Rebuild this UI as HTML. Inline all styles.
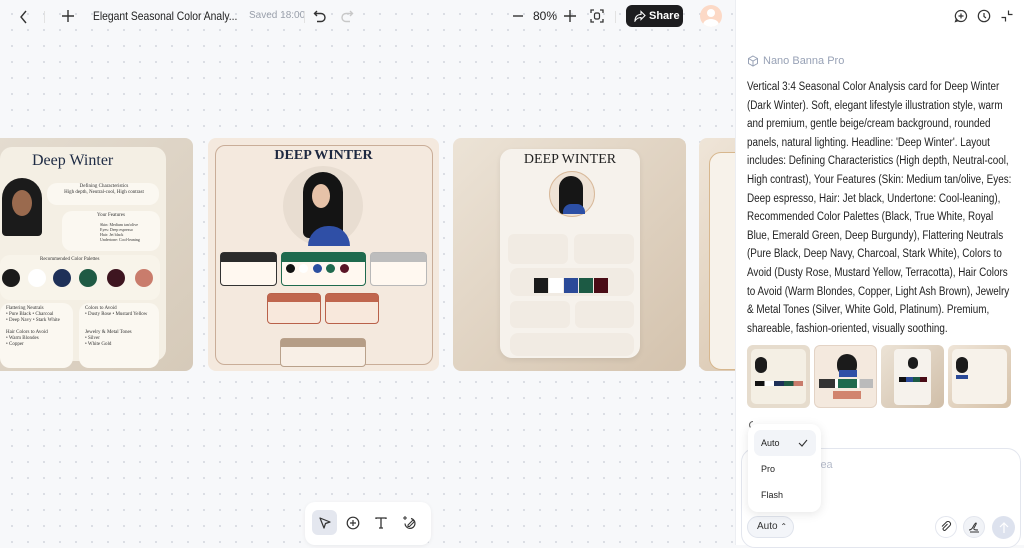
<!DOCTYPE html>
<html><head><meta charset="utf-8"><style>
*{box-sizing:border-box;margin:0;padding:0}
body{width:1024px;height:545px;overflow:hidden;font-family:"Liberation Sans",sans-serif;background:#f7f8fa;position:relative}
.canvas{position:absolute;left:0;top:0;width:735px;height:545px;background-color:#f7f8fa;background-image:radial-gradient(#d9dce3 1px,transparent 1.2px);background-size:16px 16px;background-position:4px 6px}
.top{position:absolute;left:0;top:0;width:735px;height:34px;font-size:12px;color:#222}
.panel{position:absolute;left:735px;top:0;width:289px;height:545px;background:#fff;border-left:1px solid #eceef2}
.card{position:absolute;border-radius:8px;overflow:hidden}
.serif{font-family:"Liberation Serif",serif}
.dot{position:absolute;border-radius:50%}
.p{position:absolute;font-size:11.5px;color:#1f1f1f;line-height:18.6px;left:11px;top:78px;white-space:nowrap;transform:scaleX(0.86);transform-origin:left top}
svg{display:block}
</style></head><body>
<div class="canvas"></div>
<div class="top">
 <svg style="position:absolute;left:19px;top:10px" width="10" height="14" viewBox="0 0 10 14"><path d="M7 1L2 7l5 6" stroke="#333" stroke-width="1.4" fill="none"/></svg>
 <div style="position:absolute;left:44px;top:11px;width:1px;height:12px;background:#e2e2e2"></div>
 <svg style="position:absolute;left:61px;top:9px" width="14" height="14" viewBox="0 0 14 14"><path d="M7 1v12M1 7h12" stroke="#333" stroke-width="1.4"/></svg>
 <span style="position:absolute;left:93px;top:9px;font-size:12px;color:#222;white-space:nowrap;transform:scaleX(0.86);transform-origin:left">Elegant Seasonal Color Analy...</span>
 <span style="position:absolute;left:249px;top:10px;font-size:10px;color:#9aa0ab;white-space:nowrap">Saved 18:00</span>
 <div style="position:absolute;left:304px;top:11px;width:1px;height:12px;background:#e2e2e2"></div>
 <svg style="position:absolute;left:313px;top:9px" width="14" height="14" viewBox="0 0 14 14"><path d="M4 2L1.5 4.5 4 7M1.5 4.5H8a4 4 0 010 8H4" stroke="#333" stroke-width="1.4" fill="none"/></svg>
 <svg style="position:absolute;left:340px;top:9px" width="14" height="14" viewBox="0 0 14 14"><path d="M10 2l2.5 2.5L10 7M12.5 4.5H6a4 4 0 000 8h4" stroke="#c8c8c8" stroke-width="1.4" fill="none"/></svg>
 <svg style="position:absolute;left:511px;top:9px" width="14" height="14"><path d="M2 7h10" stroke="#333" stroke-width="1.4"/></svg>
 <span style="position:absolute;left:533px;top:9px;font-size:12px">80%</span>
 <svg style="position:absolute;left:563px;top:9px" width="14" height="14"><path d="M7 1v12M1 7h12" stroke="#333" stroke-width="1.4"/></svg>
 <svg style="position:absolute;left:590px;top:9px" width="14" height="14" viewBox="0 0 14 14"><path d="M1 4V1h3M10 1h3v3M13 10v3h-3M4 13H1v-3" stroke="#333" stroke-width="1.3" fill="none"/><rect x="4.5" y="4" width="5" height="6" rx="1.5" stroke="#333" stroke-width="1.2" fill="none"/></svg>
 <div style="position:absolute;left:615px;top:11px;width:1px;height:12px;background:#e2e2e2"></div>
 <div style="position:absolute;left:626px;top:5px;width:57px;height:22px;background:#1d1d1f;border-radius:6px;color:#fff;font-size:11px;font-weight:bold;line-height:22px;padding-left:23px">Share
  <svg style="position:absolute;left:8px;top:5px" width="12" height="12" viewBox="0 0 12 12"><path d="M7 1.5l4 4-4 4V7.5C4 7.5 2.5 8.5 1 11c0-4 2-6.5 6-6.5z" stroke="#fff" stroke-width="1.1" fill="none"/></svg></div>
 <div style="position:absolute;left:700px;top:5px;width:22px;height:22px;border-radius:50%;background:#fcd9c6;overflow:hidden"><div style="position:absolute;left:7px;top:4px;width:8px;height:8px;border-radius:50%;background:#fff"></div><div style="position:absolute;left:3px;top:14px;width:16px;height:12px;border-radius:50%;background:#fff"></div></div>
</div>

<div class="card" style="left:-8px;top:138px;width:201px;height:233px;background:linear-gradient(135deg,#e4dcd0,#d6cab9)">
 <div style="position:absolute;left:8px;top:9px;width:166px;height:214px;background:#f4efe4;border-radius:12px"></div>
 <div class="serif" style="position:absolute;left:40px;top:14px;font-size:16px;color:#1e2b44">Deep Winter</div>
 <div style="position:absolute;left:10px;top:40px;width:40px;height:58px;background:#1b1b1b;border-radius:20px 20px 4px 4px"></div>
 <div style="position:absolute;left:20px;top:52px;width:20px;height:26px;background:#9a6a4e;border-radius:50%"></div>
 <div style="position:absolute;left:55px;top:45px;width:112px;height:22px;background:#fbf8f1;border-radius:10px"></div>
 <div class="serif" style="position:absolute;left:62px;top:46px;font-size:5px;color:#333;line-height:6px;text-align:center;width:100px">Defining Characteristics<br>High depth, Neutral-cool, High contrast</div>
 <div style="position:absolute;left:70px;top:73px;width:98px;height:40px;background:#fbf8f1;border-radius:10px"></div>
 <div class="serif" style="position:absolute;left:105px;top:75px;font-size:5px;color:#333;line-height:6px">Your Features</div>
 <div class="serif" style="position:absolute;left:108px;top:84px;font-size:4px;color:#333;line-height:5px">Skin: Medium tan/olive<br>Eyes: Deep espresso<br>Hair: Jet black<br>Undertone: Cool-leaning</div>
 <div style="position:absolute;left:8px;top:117px;width:160px;height:45px;background:#f8f4ea;border-radius:10px"></div>
 <div class="serif" style="position:absolute;left:48px;top:119px;font-size:5px;color:#333">Recommended Color Palettes</div>
 <div class="dot" style="left:10px;top:131px;width:18px;height:18px;background:#1b1b1b"></div>
 <div class="dot" style="left:36px;top:131px;width:18px;height:18px;background:#fff"></div>
 <div class="dot" style="left:61px;top:131px;width:18px;height:18px;background:#1e3058"></div>
 <div class="dot" style="left:87px;top:131px;width:18px;height:18px;background:#1f5a44"></div>
 <div class="dot" style="left:115px;top:131px;width:18px;height:18px;background:#3e1520"></div>
 <div class="dot" style="left:143px;top:131px;width:18px;height:18px;background:#c97c6c"></div>
 <div style="position:absolute;left:8px;top:165px;width:73px;height:65px;background:#fbf8f1;border-radius:10px"></div>
 <div style="position:absolute;left:87px;top:165px;width:80px;height:65px;background:#fbf8f1;border-radius:10px"></div>
 <div class="serif" style="position:absolute;left:14px;top:168px;font-size:5px;color:#333;line-height:6px">Flattering Neutrals<br>• Pure Black • Charcoal<br>• Deep Navy • Stark White<br><br>Hair Colors to Avoid<br>• Warm Blondes<br>• Copper</div>
 <div class="serif" style="position:absolute;left:93px;top:168px;font-size:5px;color:#333;line-height:6px">Colors to Avoid<br>• Dusty Rose • Mustard Yellow<br><br><br>Jewelry &amp; Metal Tones<br>• Silver<br>• White Gold</div>
</div>

<div class="card" style="left:208px;top:138px;width:231px;height:233px;background:#f4e9de">
 <div style="position:absolute;left:7px;top:7px;width:218px;height:220px;border:1px solid #c9ad98;border-radius:10px"></div>
 <div class="serif" style="position:absolute;left:0;width:231px;text-align:center;top:10px;font-size:14px;font-weight:bold;color:#1e2840">DEEP WINTER</div>
 <div class="dot" style="left:75px;top:28px;width:80px;height:80px;background:#e8ddd1"></div>
 <div style="position:absolute;left:95px;top:34px;width:40px;height:66px;background:#141414;border-radius:20px 20px 6px 6px"></div>
 <div style="position:absolute;left:104px;top:46px;width:18px;height:24px;background:#e6c2a8;border-radius:50%"></div>
 <div style="position:absolute;left:100px;top:88px;width:42px;height:20px;background:#2f4fa6;border-radius:20px 20px 0 0"></div>
 <div style="position:absolute;left:12px;top:114px;width:57px;height:34px;border:1.5px solid #333;border-radius:4px;background:#fff8f0"><div style="height:9px;background:#2b2b2b"></div></div>
 <div style="position:absolute;left:73px;top:114px;width:85px;height:34px;border:1.5px solid #1f6a4e;border-radius:4px;background:#fff8f0"><div style="height:9px;background:#1f6a4e"></div></div>
 <div style="position:absolute;left:162px;top:114px;width:57px;height:34px;border:1.5px solid #b8b8b8;border-radius:4px;background:#fff8f0"><div style="height:9px;background:#bdbdbd"></div></div>
 <div class="dot" style="left:78px;top:126px;width:9px;height:9px;background:#111"></div>
 <div class="dot" style="left:91px;top:126px;width:9px;height:9px;background:#fff"></div>
 <div class="dot" style="left:105px;top:126px;width:9px;height:9px;background:#2b4fa0"></div>
 <div class="dot" style="left:118px;top:126px;width:9px;height:9px;background:#1f6a4e"></div>
 <div class="dot" style="left:132px;top:126px;width:9px;height:9px;background:#5a1526"></div>
 <div style="position:absolute;left:59px;top:155px;width:54px;height:31px;border:1.5px solid #b9614a;border-radius:4px;background:#f8e8dc"><div style="height:8px;background:#c0664e"></div></div>
 <div style="position:absolute;left:117px;top:155px;width:54px;height:31px;border:1.5px solid #b9614a;border-radius:4px;background:#f8e8dc"><div style="height:8px;background:#c0664e"></div></div>
 <div style="position:absolute;left:72px;top:200px;width:86px;height:29px;border:1.5px solid #b9a18b;border-radius:4px;background:#f8efe6"><div style="height:8px;background:#b59d86"></div></div>
</div>

<div class="card" style="left:453px;top:138px;width:233px;height:233px;background:linear-gradient(135deg,#ece3d6,#d4c3ae)">
 <div style="position:absolute;left:47px;top:11px;width:140px;height:209px;background:#f6f2ec;border-radius:12px;box-shadow:0 2px 6px rgba(0,0,0,.08)"></div>
 <div class="serif" style="position:absolute;left:47px;width:140px;text-align:center;top:14px;font-size:14px;color:#222">DEEP WINTER</div>
 <div class="dot" style="left:96px;top:33px;width:46px;height:46px;background:#efe3d6;border:1px solid #d8b99a"></div>
 <div style="position:absolute;left:106px;top:38px;width:24px;height:38px;background:#161616;border-radius:12px 12px 4px 4px"></div>
 <div style="position:absolute;left:110px;top:66px;width:22px;height:10px;background:#2c4fa5;border-radius:8px 8px 0 0"></div>
 <div style="position:absolute;left:55px;top:96px;width:60px;height:30px;background:#f1ebe3;border-radius:6px"></div>
 <div style="position:absolute;left:121px;top:96px;width:60px;height:30px;background:#f1ebe3;border-radius:6px"></div>
 <div style="position:absolute;left:57px;top:130px;width:124px;height:28px;background:#f1ebe3;border-radius:8px"></div>
 <div style="position:absolute;left:81px;top:140px;width:14px;height:15px;background:#1b1b1b"></div>
 <div style="position:absolute;left:96px;top:140px;width:14px;height:15px;background:#fff"></div>
 <div style="position:absolute;left:111px;top:140px;width:14px;height:15px;background:#2b4a98"></div>
 <div style="position:absolute;left:126px;top:140px;width:14px;height:15px;background:#1c5a44"></div>
 <div style="position:absolute;left:141px;top:140px;width:14px;height:15px;background:#4a0c16"></div>
 <div style="position:absolute;left:57px;top:163px;width:60px;height:27px;background:#f1ebe3;border-radius:6px"></div>
 <div style="position:absolute;left:122px;top:163px;width:59px;height:27px;background:#f1ebe3;border-radius:6px"></div>
 <div style="position:absolute;left:57px;top:195px;width:124px;height:23px;background:#f1ebe3;border-radius:8px"></div>
</div>
<div class="card" style="left:699px;top:138px;width:60px;height:233px;background:linear-gradient(135deg,#efe5d8,#dbc9b3)">
 <div style="position:absolute;left:10px;top:14px;width:60px;height:218px;border:1px solid #d7b78e;border-radius:12px;background:#f7f2ea"></div>
</div>

<div style="position:absolute;left:305px;top:502px;width:126px;height:43px;background:#fff;border-radius:10px;box-shadow:0 1px 4px rgba(0,0,0,.06)">
 <div style="position:absolute;left:7px;top:8px;width:25px;height:25px;background:#e4e7ef;border-radius:6px"></div>
 <svg style="position:absolute;left:13px;top:14px" width="14" height="14" viewBox="0 0 14 14"><path d="M2 2l10 4-4.5 1.5L6 12z" stroke="#333" stroke-width="1.2" fill="none" stroke-linejoin="round"/></svg>
 <svg style="position:absolute;left:41px;top:14px" width="14" height="14" viewBox="0 0 14 14"><circle cx="7" cy="7" r="5.8" stroke="#333" stroke-width="1.2" fill="none"/><path d="M7 4v6M4 7h6" stroke="#333" stroke-width="1.2"/></svg>
 <svg style="position:absolute;left:69px;top:14px" width="14" height="14" viewBox="0 0 14 14"><path d="M2 3V2h10v1M7 2v10M5 12h4" stroke="#333" stroke-width="1.3" fill="none"/></svg>
 <svg style="position:absolute;left:97px;top:13px" width="15" height="15" viewBox="0 0 15 15"><path d="M9 3.5a5 5 0 11-6 5" stroke="#333" stroke-width="1.2" fill="none"/><path d="M6 10l5-5 1.5 1.5-5 5H6z" stroke="#333" stroke-width="1.1" fill="none"/><path d="M3 1v4M1 3h4" stroke="#333" stroke-width="1"/></svg>
</div>

<div class="panel">
 <svg style="position:absolute;left:218px;top:9px" width="14" height="14" viewBox="0 0 14 14"><path d="M7 1.5a5.5 5.5 0 11-4.6 8.5L1.5 12.5l2.5-.8A5.5 5.5 0 017 1.5z" stroke="#333" stroke-width="1.2" fill="none"/><path d="M7 4.5v5M4.5 7h5" stroke="#333" stroke-width="1.2"/></svg>
 <svg style="position:absolute;left:241px;top:9px" width="14" height="14" viewBox="0 0 14 14"><circle cx="7" cy="7" r="5.7" stroke="#333" stroke-width="1.2" fill="none"/><path d="M7 4v3.5l2 1.5" stroke="#333" stroke-width="1.2" fill="none"/></svg>
 <svg style="position:absolute;left:264px;top:9px" width="14" height="14" viewBox="0 0 14 14"><path d="M1.5 8.5h4v4M12.5 5.5h-4v-4" stroke="#333" stroke-width="1.2" fill="none"/></svg>
 <svg style="position:absolute;left:11px;top:55px" width="12" height="12" viewBox="0 0 12 12"><path d="M6 1l4.5 2.5v5L6 11 1.5 8.5v-5zM1.5 3.5L6 6l4.5-2.5M6 6v5" stroke="#98a2b6" stroke-width="1" fill="none"/></svg>
 <div style="position:absolute;left:27px;top:55px;font-size:11px;color:#98a2b6">Nano Banna Pro</div>
 <div class="p">Vertical 3:4 Seasonal Color Analysis card for Deep Winter<br>(Dark Winter). Soft, elegant lifestyle illustration style, warm<br>and premium, gentle beige/cream background, rounded<br>panels, natural lighting. Headline: 'Deep Winter'. Layout<br>includes: Defining Characteristics (High depth, Neutral-cool,<br>High contrast), Your Features (Skin: Medium tan/olive, Eyes:<br>Deep espresso, Hair: Jet black, Undertone: Cool-leaning),<br>Recommended Color Palettes (Black, True White, Royal<br>Blue, Emerald Green, Deep Burgundy), Flattering Neutrals<br>(Pure Black, Deep Navy, Charcoal, Stark White), Colors to<br>Avoid (Dusty Rose, Mustard Yellow, Terracotta), Hair Colors<br>to Avoid (Warm Blondes, Copper, Light Ash Brown), Jewelry<br>&amp; Metal Tones (Silver, White Gold, Platinum). Premium,<br>shareable, fashion-oriented, visually soothing.</div>
 <div style="position:absolute;left:11px;top:345px;width:63px;height:63px;border-radius:6px;background:#e6dccd"><div style="margin:4px;height:55px;background:#f4efe4;border-radius:5px"></div><div style="position:absolute;left:8px;top:12px;width:12px;height:16px;background:#1b1b1b;border-radius:6px"></div><div style="position:absolute;left:8px;top:36px;width:48px;height:5px;background:linear-gradient(90deg,#111 20%,#fff 20% 40%,#1e3058 40% 60%,#1f5a44 60% 80%,#c97c6c 80%)"></div></div>
 <div style="position:absolute;left:78px;top:345px;width:63px;height:63px;border-radius:6px;background:#f4e9de;border:1px solid #e3d3c5"><div style="position:absolute;left:22px;top:8px;width:20px;height:22px;background:#1b1b1b;border-radius:10px"></div><div style="position:absolute;left:24px;top:24px;width:18px;height:7px;background:#2f4fa6"></div><div style="position:absolute;left:4px;top:33px;width:54px;height:9px;background:linear-gradient(90deg,#333 30%,#fff 30% 35%,#1f6a4e 35% 70%,#fff 70% 75%,#bbb 75%)"></div><div style="position:absolute;left:18px;top:45px;width:28px;height:8px;background:#d1846e"></div></div>
 <div style="position:absolute;left:145px;top:345px;width:63px;height:63px;border-radius:6px;background:linear-gradient(135deg,#ece3d6,#d0bea8)"><div style="position:absolute;left:13px;top:4px;width:37px;height:56px;background:#f6f2ec;border-radius:4px"></div><div style="position:absolute;left:27px;top:12px;width:10px;height:12px;background:#1b1b1b;border-radius:5px"></div><div style="position:absolute;left:18px;top:32px;width:28px;height:5px;background:linear-gradient(90deg,#111 25%,#2b4a98 25% 50%,#1c5a44 50% 75%,#4a0c16 75%)"></div></div>
 <div style="position:absolute;left:212px;top:345px;width:63px;height:63px;border-radius:6px;background:linear-gradient(135deg,#efe5d8,#d6c2a9)"><div style="position:absolute;left:4px;top:4px;width:55px;height:55px;background:#f7f2ea;border-radius:5px"></div><div style="position:absolute;left:8px;top:12px;width:12px;height:16px;background:#1b1b1b;border-radius:6px"></div><div style="position:absolute;left:8px;top:30px;width:12px;height:4px;background:#2b4a98"></div></div>
 <svg style="position:absolute;left:12px;top:420px" width="10" height="10" viewBox="0 0 10 10"><path d="M8.5 5A3.5 3.5 0 115 1.5" stroke="#666" stroke-width="1.1" fill="none"/></svg>
 <div style="position:absolute;left:5px;top:448px;width:280px;height:100px;border:1px solid #e3e6ee;border-radius:14px;background:#fff"></div>
 <div style="position:absolute;left:82px;top:459px;font-size:11px;color:#b6bccb">lea</div>
 <div style="position:absolute;left:11px;top:516px;width:47px;height:22px;border:1px solid #dfe3ec;background:#f3f5f9;border-radius:11px;font-size:10px;color:#333;line-height:20px;padding-left:9px">Auto <span style="font-size:8px">&#8963;</span></div>
 <div class="dot" style="left:199px;top:516px;width:22px;height:22px;border:1px solid #e3e6ee"></div>
 <svg style="position:absolute;left:204px;top:521px" width="12" height="12" viewBox="0 0 12 12"><path d="M7.5 3L3.5 7a1.3 1.3 0 002 2L10 4.5a2.5 2.5 0 00-3.5-3.5L2 5.5" stroke="#333" stroke-width="1" fill="none"/></svg>
 <div class="dot" style="left:227px;top:516px;width:22px;height:22px;background:#f1f3f7;border:1px solid #e3e6ee"></div>
 <svg style="position:absolute;left:232px;top:521px" width="12" height="12" viewBox="0 0 12 12"><path d="M1 9c2 0 3-1 4-3s2-4 3-4-1 3-2 5 2 2 4 2M2 11h9" stroke="#333" stroke-width="1" fill="none"/></svg>
 <div class="dot" style="left:256px;top:516px;width:23px;height:23px;background:#dde2ee"></div>
 <svg style="position:absolute;left:262px;top:521px" width="12" height="13" viewBox="0 0 12 13"><path d="M6 12V2M2 6l4-4 4 4" stroke="#fff" stroke-width="1.2" fill="none"/></svg>
 <div style="position:absolute;left:12px;top:424px;width:73px;height:88px;background:#fff;border-radius:10px;box-shadow:0 2px 10px rgba(0,0,0,.1)">
  <div style="position:absolute;left:6px;top:6px;width:62px;height:26px;background:#f2f4f8;border-radius:7px"></div>
  <div style="position:absolute;left:13px;top:14px;font-size:9px;color:#222">Auto</div>
  <svg style="position:absolute;left:50px;top:15px" width="10" height="8" viewBox="0 0 10 8"><path d="M1 4l3 3 5-6" stroke="#333" stroke-width="1.1" fill="none"/></svg>
  <div style="position:absolute;left:13px;top:40px;font-size:9px;color:#222">Pro</div>
  <div style="position:absolute;left:13px;top:66px;font-size:9px;color:#222">Flash</div>
 </div>
</div>
</body></html>
